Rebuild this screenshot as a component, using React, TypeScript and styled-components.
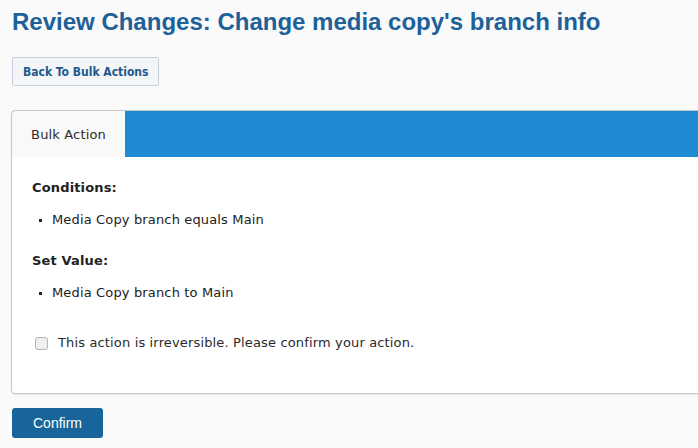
import styled, { createGlobalStyle } from "styled-components";

const Global = createGlobalStyle`
  html, body {
    margin: 0;
    padding: 0;
    background: #fafafa;
    overflow: hidden;
  }
  body {
    font-family: "DejaVu Sans", Verdana, sans-serif;
  }
`;

const Page = styled.div`
  padding: 8px 0 0 12px;
  display: flex;
  flex-direction: column;
  align-items: flex-start;
`;

const Title = styled.h1`
  margin: 0;
  font-family: "Liberation Sans", Arial, sans-serif;
  font-size: 24px;
  font-weight: bold;
  line-height: 28px;
  color: #1d6198;
`;

const BackButton = styled.button`
  margin-top: 21px;
  height: 29px;
  padding: 0 10px;
  background: #f4f5f7;
  border: 1px solid #c5cfdb;
  border-radius: 2px;
  font-family: "DejaVu Sans Condensed", "DejaVu Sans", sans-serif;
  font-weight: bold;
  font-size: 12px;
  color: #1d5b8e;
  cursor: pointer;
`;

const Panel = styled.div`
  margin-top: 24px;
  margin-left: -1px;
  width: 700px;
  height: 282px;
  background: #fff;
  border: 1px solid #c8c8c8;
  border-radius: 4px 0 0 4px;
  box-shadow: 0 1px 2px rgba(0, 0, 0, 0.08);
  display: flex;
  flex-direction: column;
  overflow: hidden;
`;

const TabBar = styled.div`
  display: flex;
  height: 46px;
  background: #1f8bd4;
`;

const Tab = styled.div<{ $active?: boolean }>`
  width: 113px;
  display: flex;
  align-items: center;
  justify-content: center;
  background: ${(p) => (p.$active ? "#f9f9f9" : "transparent")};
  font-size: 13px;
  letter-spacing: 0.15px;
  color: #2b2b2b;
`;

const Body = styled.div`
  padding: 23px 20px 0 20px;
  color: #222;
  font-size: 13px;
  letter-spacing: 0.15px;
`;

const SectionTitle = styled.div`
  font-weight: bold;
  line-height: 16px;
`;

const List = styled.ul<{ $last?: boolean }>`
  list-style: square;
  margin: 16px 0 ${(p) => (p.$last ? "0" : "25px")} 0;
  padding-left: 20px;
  line-height: 16px;
  li::marker {
    font-size: 10px;
  }
`;

const Confirm = styled.label`
  display: flex;
  align-items: center;
  gap: 10px;
  margin: 34px 0 0 3px;
  line-height: 16px;
  color: #2a2a2a;
`;

const Check = styled.span`
  width: 11px;
  height: 11px;
  border: 1px solid #b4b4b4;
  border-radius: 3px;
  background: #f0f0f0;
`;

const ConfirmButton = styled.button`
  margin-top: 14px;
  width: 91px;
  height: 30px;
  background: #17659a;
  border: none;
  border-radius: 3px;
  color: #fff;
  font-family: "Liberation Sans", Arial, sans-serif;
  font-size: 14px;
  cursor: pointer;
`;

export default function App() {
  return (
    <>
      <Global />
      <Page>
        <Title>Review Changes: Change media copy's branch info</Title>
        <BackButton>Back To Bulk Actions</BackButton>
        <Panel>
          <TabBar>
            <Tab $active>Bulk Action</Tab>
          </TabBar>
          <Body>
            <SectionTitle>Conditions:</SectionTitle>
            <List>
              <li>Media Copy branch equals Main</li>
            </List>
            <SectionTitle>Set Value:</SectionTitle>
            <List $last>
              <li>Media Copy branch to Main</li>
            </List>
            <Confirm>
              <Check />
              This action is irreversible. Please confirm your action.
            </Confirm>
          </Body>
        </Panel>
        <ConfirmButton>Confirm</ConfirmButton>
      </Page>
    </>
  );
}
